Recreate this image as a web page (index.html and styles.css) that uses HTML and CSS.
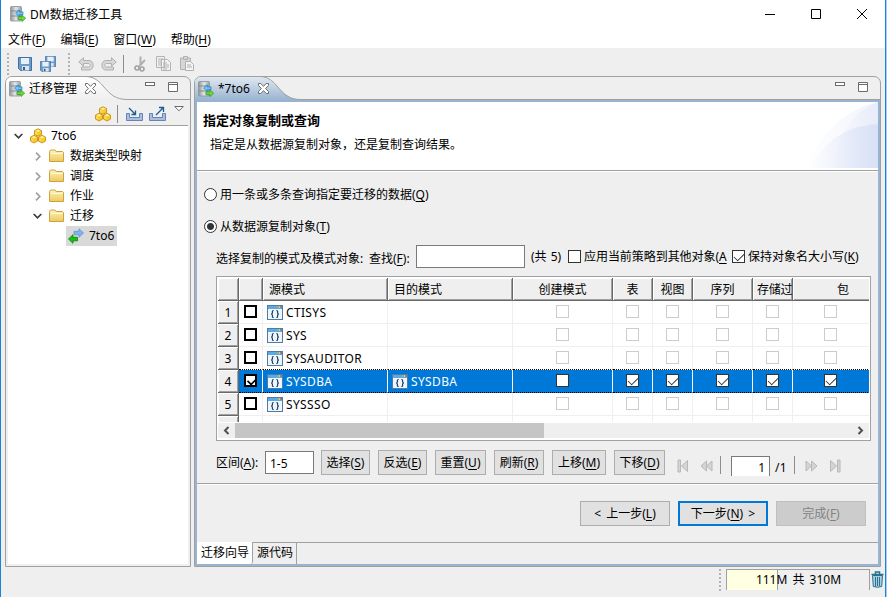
FILE: index.html
```
<!DOCTYPE html>
<html lang="zh-CN">
<head>
  <meta charset="UTF-8" />
  <meta name="viewport" content="width=device-width, initial-scale=1.0"/>
  <title>DM数据迁移工具</title>
  <link rel="stylesheet" href="styles.css">
</head>
<body>
  <!-- shared icons -->
  <svg class="defs" width="0" height="0">
    <defs>
      <linearGradient id="srv" x1="0" x2="1" y1="0" y2="0">
        <stop offset="0" stop-color="#8f9599"/><stop offset=".5" stop-color="#e4e6e7"/><stop offset="1" stop-color="#9a9fa2"/>
      </linearGradient>
      <linearGradient id="tabBlue" x1="0" x2="0" y1="0" y2="1">
        <stop offset="0" stop-color="#e0e8f1"/><stop offset="1" stop-color="#99b4d1"/>
      </linearGradient>
      <linearGradient id="tabWhite" x1="0" x2="0" y1="0" y2="1">
        <stop offset="0" stop-color="#ffffff"/><stop offset="1" stop-color="#efefef"/>
      </linearGradient>
      <linearGradient id="fold" x1="0" x2="0" y1="0" y2="1">
        <stop offset="0" stop-color="#fdf3bd"/><stop offset="1" stop-color="#ecc95c"/>
      </linearGradient>
      <linearGradient id="arc" x1="0" x2="1" y1="0" y2="0">
        <stop offset="0" stop-color="#ccd7f3" stop-opacity="0"/><stop offset="1" stop-color="#ccd7f3" stop-opacity=".55"/>
      </linearGradient>
      <symbol id="app" viewBox="0 0 16 16">
        <rect x=".5" y=".5" width="11" height="14.500" rx="1" fill="url(#srv)" stroke="#8c9296" stroke-width=".8"/>
        <path d="M1 5h10M1 10h10" stroke="#858b8f"/>
        <path d="M5.500 7.200l3.800-3.300v2H13v2.700H9.300v2z" fill="#6cc6f7" stroke="#1b7cc4" stroke-width=".7"/>
        <path d="M15.700 12.200l-3.700-3.300v2H8v2.700h4v2z" fill="#6ddb35" stroke="#2f9a1c" stroke-width=".7"/>
      </symbol>
      <symbol id="save" viewBox="0 0 14 14">
        <path d="M.5.5h13v13h-11l-2-2z" fill="#6f9bc8" stroke="#3f6fa5"/>
        <rect x="3" y="1" width="8" height="6" fill="#e6f0fa"/>
        <rect x="4" y="9" width="7" height="4.500" fill="#dce3ea"/><rect x="5" y="10" width="2" height="3" fill="#345f90"/>
      </symbol>
      <symbol id="undo" viewBox="0 0 16 14">
        <path d="M5.500.7v2.800H11c5.500 0 5.500 9.500 0 9.500H3.500v-3h7c2.300 0 2.300-3.500 0-3.500h-5v2.800L.8 5z" fill="#d8d8d8" stroke="#b0b0b0"/>
      </symbol>
      <symbol id="cubes" viewBox="0 0 16 16">
        <g stroke="#bd8806" stroke-width=".8" fill="#fbc72b">
          <path d="M8 .8l3.500 1.700v4L8 8.300 4.500 6.500v-4zM4 7.300l3.500 1.800v4L4 15 .5 13.100v-4zM12 7.300l3.500 1.800v4L12 15l-3.500-1.900v-4z"/>
        </g>
        <path d="M8 1.500l2.500 1.300L8 4 5.500 2.800zM4 8l2.500 1.300L4 10.600 1.500 9.300zM12 8l2.500 1.300-2.500 1.300-2.500-1.300z" fill="#fff1a0"/>
        <path d="M5.300 3.600L7.500 5v2l-2.200-1.100zM1.300 10.200l2.200 1.300v2l-2.200-1.100zM9.300 10.200l2.200 1.300v2l-2.200-1.100z" fill="#fddc5e"/>
      </symbol>
      <symbol id="folder" viewBox="0 0 15 14">
        <path d="M.5 12.500v-10l1-1.500h4.500l1.200 1.500H13.500l1 1v9z" fill="url(#fold)" stroke="#cfa23e"/>
        <path d="M2 4.500h11.500" stroke="#fff8d8"/>
      </symbol>
      <symbol id="close" viewBox="0 0 11 11">
        <path d="M.5.5h2.300l2.700 2.900L8.200.5h2.300v2L7.600 5.500l2.900 3v2H8.200L5.500 7.600l-2.700 2.900H.5v-2l2.900-3-2.900-3z" fill="#fff" stroke="#6c6c6c"/>
      </symbol>
      <symbol id="min" viewBox="0 0 10 4"><rect x=".5" y=".5" width="9" height="3" fill="#fff" stroke="#6b6b6b"/></symbol>
      <symbol id="max" viewBox="0 0 10 10"><path d="M.5.5h9v9h-9zM0 2.500h10" fill="#fff" stroke="#6b6b6b"/></symbol>
      <symbol id="right" viewBox="0 0 6 9"><path d="M1 .7l3.800 3.800L1 8.300" fill="none" stroke="#a0a0a0" stroke-width="1.700"/></symbol>
      <symbol id="down" viewBox="0 0 9 6"><path d="M.7 1l3.800 3.800L8.300 1" fill="none" stroke="#3c3c3c" stroke-width="1.700"/></symbol>
      <symbol id="schema" viewBox="0 0 16 15">
        <rect x=".5" y=".5" width="15" height="14" fill="#f0f5fb" stroke="#4c7daa"/>
        <path d="M1 2.500h14" stroke="#5fa8e6" stroke-width="3"/>
        <path d="M10 2h1.500" stroke="#7ed04a" stroke-width="1.500"/><path d="M12 2h1" stroke="#ffe04a" stroke-width="1.500"/><path d="M13.500 2h1.500" stroke="#e84b2c" stroke-width="1.500"/>
        <path d="M6.700 5.500q-1.500 0-1.300 1.500.2 2-1.400 2 1.600 0 1.400 2-.2 1.500 1.300 1.500M9.300 5.500q1.500 0 1.300 1.500-.2 2 1.400 2-1.600 0-1.400 2 .2 1.500-1.300 1.500" fill="none" stroke="#1d3f66" stroke-width="1.200"/>
      </symbol>
      <symbol id="first" viewBox="0 0 13 14">
        <path d="M1 1h2.500v12H1zM10.500 1.500v11L4.500 7z" fill="#d4d4d4" stroke="#b8b8b8"/>
      </symbol>
      <symbol id="prev" viewBox="0 0 13 14">
        <path d="M6.500 2v10L1 7zM12 2v10L6.500 7z" fill="#d4d4d4" stroke="#b8b8b8"/>
      </symbol>
    </defs>
  </svg>

  <div class="window">
    <div class="titlebar">
      <svg class="app-icon" width="16" height="16"><use href="#app"/></svg>
      <span class="title">DM数据迁移工具</span>
      <div class="window-buttons">
        <svg width="10" height="10"><path d="M0 5.500h10" stroke="#000"/></svg>
        <svg width="10" height="10"><path d="M.5.5h9v9h-9z" fill="none" stroke="#000"/></svg>
        <svg width="10" height="10"><path d="M0 0l10 10M10 0L0 10" stroke="#000"/></svg>
      </div>
    </div>

    <div class="menubar">
      <span>文件(<u>F</u>)</span>
      <span>编辑(<u>E</u>)</span>
      <span>窗口(<u>W</u>)</span>
      <span>帮助(<u>H</u>)</span>
    </div>

    <div class="toolbar">
      <i class="grip"></i>
      <svg class="tool-save" width="14" height="14"><use href="#save"/></svg>
      <svg class="tool-saveall" width="16" height="16" viewBox="0 0 16 16">
        <use href="#save" x="5" width="11" height="11"/>
        <use href="#save" y="5" width="11" height="11"/>
      </svg>
      <i class="grip grip-second"></i>
      <svg class="tool-undo" width="16" height="14"><use href="#undo"/></svg>
      <svg class="tool-redo" width="16" height="14"><use href="#undo"/></svg>
      <i class="separator"></i>
      <svg class="tool-cut" width="12" height="16" viewBox="0 0 12 16" fill="none">
        <path d="M6.500.5v8.500M11 4L5 10.500" stroke="#b0b0b0" stroke-width="2"/>
        <circle cx="3" cy="12" r="2" stroke="#a0a0a0" stroke-width="1.600"/><circle cx="8" cy="13" r="2" stroke="#a0a0a0" stroke-width="1.600"/>
      </svg>
      <svg class="tool-copy" width="15" height="15" viewBox="0 0 15 15" fill="#f2f2f2" stroke="#b3b3b3">
        <path d="M.5.5h8v11h-8zM5.500 3.500h6l3 3v8h-9z"/><path d="M2 3h5M2 5h3M2 7h3M2 9h3M7 7h4M7 9h6M7 11h6M7 13h4"/>
      </svg>
      <svg class="tool-paste" width="14" height="15" viewBox="0 0 14 15" fill="#d6d6d6" stroke="#b0b0b0">
        <path d="M.5 2h10v11.500H.5z"/><path d="M3.500.5h4v3h-4z"/><path d="M5.500 5.500h5l3 3v6h-8z" fill="#f4f4f4"/><path d="M7 9h4M7 11h5"/>
      </svg>
    </div>

    <div class="workbench">
      <div class="panel explorer">
        <div class="panel-head">
          <svg class="head-shape" width="184" height="23">
            <path d="M0 22.500V0H82C98 0 98 22.500 121 22.500z" fill="url(#tabWhite)"/>
            <path d="M80-.5C99 0 98 22.500 121 22.500H184" fill="none" stroke="#a0a0a0"/>
          </svg>
          <div class="head-row">
            <svg class="app-icon" width="16" height="16"><use href="#app"/></svg>
            <span class="tab-name">迁移管理</span>
            <svg width="11" height="11"><use href="#close"/></svg>
            <div class="head-buttons">
              <svg width="10" height="4"><use href="#min"/></svg>
              <svg width="10" height="10"><use href="#max"/></svg>
            </div>
          </div>
        </div>
        <div class="explorer-tools">
          <svg width="16" height="16"><use href="#cubes"/></svg>
          <i class="separator"></i>
          <svg width="17" height="16" viewBox="0 0 17 16">
            <path d="M.5 7.500h3v4h10v-4h3v7H.5z" fill="#a9bfe0" stroke="#6583b4"/><path d="M3 2l6 6M9.500 4.500v4h-4" stroke="#1c5b91" fill="none" stroke-width="1.300"/>
          </svg>
          <svg width="17" height="16" viewBox="0 0 17 16">
            <path d="M.5 7.500h3v4h10v-4h3v7H.5z" fill="#a9bfe0" stroke="#6583b4"/><path d="M7 9l7-7M10 1.500h4.500V6" stroke="#1c5b91" fill="none" stroke-width="1.300"/>
          </svg>
          <svg class="view-menu" width="10" height="6"><path d="M.7.5h8.600L5 4.800z" fill="#fff" stroke="#6b6b6b"/></svg>
        </div>
        <ul class="tree">
          <li class="level-0"><svg class="arrow" width="9" height="6"><use href="#down"/></svg><svg class="node" width="16" height="16"><use href="#cubes"/></svg><span>7to6</span></li>
          <li class="level-1"><svg class="arrow" width="6" height="9"><use href="#right"/></svg><svg class="node" width="15" height="14"><use href="#folder"/></svg><span>数据类型映射</span></li>
          <li class="level-1"><svg class="arrow" width="6" height="9"><use href="#right"/></svg><svg class="node" width="15" height="14"><use href="#folder"/></svg><span>调度</span></li>
          <li class="level-1"><svg class="arrow" width="6" height="9"><use href="#right"/></svg><svg class="node" width="15" height="14"><use href="#folder"/></svg><span>作业</span></li>
          <li class="level-1"><svg class="arrow" width="9" height="6"><use href="#down"/></svg><svg class="node" width="15" height="14"><use href="#folder"/></svg><span>迁移</span></li>
          <li class="level-2">
            <div class="selected-node">
              <svg width="16" height="16" viewBox="0 0 16 16">
                <path d="M15.500 5L11 .8v2.500H6v3.500h5v2.500z" fill="#7fb2ee" stroke="#5a8fd0" stroke-width=".7"/>
                <path d="M.5 11L5 6.700v2.600h4.500v3.500H5v2.500z" fill="#12c312" stroke="#0a7d0a" stroke-width=".8"/>
              </svg>
              <span>7to6</span>
            </div>
          </li>
        </ul>
      </div>

      <div class="panel editor">
        <div class="panel-head">
          <svg class="head-shape" width="685" height="23">
            <path d="M0 23V0H65C83 0 84 22.500 107 22.500V23z" fill="url(#tabBlue)"/>
            <path d="M65-.5C84 0 83 22.500 105 22.500H685" fill="none" stroke="#a0a0a0"/>
          </svg>
          <div class="head-row">
            <svg class="app-icon" width="16" height="16"><use href="#app"/></svg>
            <span class="tab-name">*7to6</span>
            <svg width="11" height="11"><use href="#close"/></svg>
            <div class="head-buttons">
              <svg width="10" height="4"><use href="#min"/></svg>
              <svg width="10" height="10"><use href="#max"/></svg>
            </div>
          </div>
        </div>

        <div class="editor-body">
          <div class="banner">
            <div class="banner-text">
              <h1>指定对象复制或查询</h1>
              <p>指定是从数据源复制对象，还是复制查询结果。</p>
            </div>
            <svg width="74" height="66" viewBox="0 0 74 66">
              <path d="M0 66C16 34 38 8 74 0V66z" fill="url(#arc)" opacity=".5"/>
              <path d="M28 66C34 36 46 10 74 0V66z" fill="url(#arc)" opacity=".5"/>
              <path d="M6 66C20 40 40 24 74 22V66z" fill="url(#arc)"/>
            </svg>
          </div>

          <div class="wizard">
            <label class="radio-row"><i class="radio"></i>用一条或多条查询指定要迁移的数据(<u>Q</u>)</label>
            <label class="radio-row second"><i class="radio on"></i>从数据源复制对象(<u>T</u>)</label>

            <div class="filter">
              <span class="filter-label">选择复制的模式及模式对象:</span>
              <span class="find-label">查找(<u>F</u>):</span>
              <input class="find" type="text">
              <span class="count">(共 5)</span>
              <i class="check dark"></i>
              <span class="apply">应用当前策略到其他对象(<u>A</u></span>
              <i class="check dark on"></i>
              <span class="keep">保持对象名大小写(<u>K</u>)</span>
            </div>

            <div class="grid">
              <div class="grid-view">
                <table>
                  <colgroup>
                    <col class="c-num"><col class="c-pick"><col class="c-name"><col class="c-name"><col class="c-create">
                    <col class="c-small"><col class="c-small"><col class="c-seq"><col class="c-small"><col class="c-pack">
                  </colgroup>
                  <tr class="head">
                    <th></th><th></th><th class="left">源模式</th><th class="left">目的模式</th><th>创建模式</th>
                    <th>表</th><th>视图</th><th>序列</th><th class="cut">存储过</th><th class="pack">包</th>
                  </tr>
                  <tr>
                    <th>1</th><td><i class="check thick"></i></td>
                    <td class="name"><svg width="16" height="15"><use href="#schema"/></svg>CTISYS</td><td></td>
                    <td><i class="check"></i></td><td><i class="check"></i></td><td><i class="check"></i></td><td><i class="check"></i></td><td><i class="check"></i></td><td class="pack"><i class="check"></i></td>
                  </tr>
                  <tr>
                    <th>2</th><td><i class="check thick"></i></td>
                    <td class="name"><svg width="16" height="15"><use href="#schema"/></svg>SYS</td><td></td>
                    <td><i class="check"></i></td><td><i class="check"></i></td><td><i class="check"></i></td><td><i class="check"></i></td><td><i class="check"></i></td><td class="pack"><i class="check"></i></td>
                  </tr>
                  <tr class="before">
                    <th>3</th><td><i class="check thick"></i></td>
                    <td class="name"><svg width="16" height="15"><use href="#schema"/></svg>SYSAUDITOR</td><td></td>
                    <td><i class="check"></i></td><td><i class="check"></i></td><td><i class="check"></i></td><td><i class="check"></i></td><td><i class="check"></i></td><td class="pack"><i class="check"></i></td>
                  </tr>
                  <tr class="selected">
                    <th>4</th><td><i class="check thick on"></i></td>
                    <td class="name"><svg width="16" height="15"><use href="#schema"/></svg>SYSDBA</td>
                    <td class="name"><svg width="16" height="15"><use href="#schema"/></svg>SYSDBA</td>
                    <td><i class="check dark"></i></td><td><i class="check dark on"></i></td><td><i class="check dark on"></i></td><td><i class="check dark on"></i></td><td><i class="check dark on"></i></td><td class="pack"><i class="check dark on"></i></td>
                  </tr>
                  <tr>
                    <th>5</th><td><i class="check thick"></i></td>
                    <td class="name"><svg width="16" height="15"><use href="#schema"/></svg>SYSSSO</td><td></td>
                    <td><i class="check"></i></td><td><i class="check"></i></td><td><i class="check"></i></td><td><i class="check"></i></td><td><i class="check"></i></td><td class="pack"><i class="check"></i></td>
                  </tr>
                  <tr>
                    <th></th><td></td><td></td><td></td><td></td><td></td><td></td><td></td><td></td><td></td>
                  </tr>
                </table>
              </div>
              <div class="scrollbar">
                <svg width="17" height="15"><path d="M10.500 4L7 7.500l3.500 3.500" fill="none" stroke="#505050" stroke-width="2"/></svg>
                <div class="thumb"></div>
                <svg width="17" height="15"><path d="M6.500 4L10 7.500 6.500 11" fill="none" stroke="#505050" stroke-width="2"/></svg>
              </div>
            </div>

            <div class="actions">
              <span class="range-label">区间(<u>A</u>):</span>
              <input class="range" type="text" value="1-5">
              <button class="w49">选择(<u>S</u>)</button>
              <button class="w49">反选(<u>E</u>)</button>
              <button class="w51">重置(<u>U</u>)</button>
              <button class="w50">刷新(<u>R</u>)</button>
              <button class="w54">上移(<u>M</u>)</button>
              <button class="w51">下移(<u>D</u>)</button>
              <div class="pager">
                <svg width="13" height="14"><use href="#first"/></svg>
                <svg width="13" height="14"><use href="#prev"/></svg>
                <i class="separator"></i>
                <input class="page" type="text" value="1">
                <span>/1</span>
                <i class="separator"></i>
                <svg class="flip" width="13" height="14"><use href="#prev"/></svg>
                <svg class="flip" width="13" height="14"><use href="#first"/></svg>
              </div>
            </div>
          </div>

          <div class="wizard-buttons">
            <button>&lt; 上一步(<u>L</u>)</button>
            <button class="default">下一步(<u>N</u>) &gt;</button>
            <button disabled>完成(<u>F</u>)</button>
          </div>

          <div class="page-tabs">
            <span class="page-tab active">迁移向导</span>
            <span class="page-tab">源代码</span>
          </div>
        </div>
      </div>
    </div>

    <div class="statusbar">
      <i class="grip"></i>
      <div class="heap"><div class="heap-used"></div><span>111M 共 310M</span></div>
      <svg width="13" height="17" viewBox="0 0 13 17">
        <path d="M1.500 4.500h10l-.8 11q-4.200 1.500-8.400 0z" fill="#a8d0dc" stroke="#2a7290"/>
        <path d="M4.500 6v9M6.500 6v9M8.500 6v9" stroke="#2a7290"/>
        <path d="M.5 3.500h12M4.500 3V1h4v2" fill="none" stroke="#2a7290" stroke-width="1.500"/>
      </svg>
    </div>
  </div>
</body>
</html>
```
FILE: styles.css
```
* {
  box-sizing: border-box;
}
body {
  margin: 0;
  width: 887px;
  height: 597px;
  overflow: hidden;
  background: #a9cdea;
  font-family: "Noto Sans", "Noto Sans CJK SC", sans-serif;
  font-size: 12px;
  line-height: 16px;
  color: #000;
}
svg {
  display: block;
  flex: none;
}
i {
  flex: none;
}
.defs {
  position: absolute;
}
span, label, button {
  white-space: nowrap;
}
u {
  text-underline-offset: 2px;
}
input, button {
  font: inherit;
  color: inherit;
  border-radius: 0;
  outline: none;
}
input {
  background: #fff;
  border: 1px solid #7a7a7a;
  padding: 1px 4px 0;
}
.window {
  width: 886px;
  height: 597px;
  border-left: 1px solid #1883d7;
  border-right: 1px solid #1883d7;
  background: #efefef;
  display: flex;
  flex-direction: column;
}

/* title and menu */
.titlebar {
  height: 30px;
  flex: none;
  background: #fff;
  display: flex;
  align-items: center;
  padding: 0 18px 2px 9px;
}
.title {
  margin-left: 4px;
  padding-top: 2px;
  letter-spacing: .1px;
}
.window-buttons {
  margin-left: auto;
  display: flex;
  gap: 36px;
}
.menubar {
  height: 18px;
  flex: none;
  background: #fff;
  display: flex;
  align-items: center;
  gap: 15px;
  padding: 2px 0 0 7px;
}

/* toolbar */
.toolbar {
  height: 28px;
  flex: none;
  display: flex;
  align-items: center;
  padding: 3px 0 0 6px;
}
.grip {
  width: 2px;
  height: 22px;
  background: repeating-linear-gradient(#b4b4b4 0 2px, transparent 2px 4px);
}
.separator {
  width: 1px;
  height: 18px;
  background: #8c8c8c;
}
.tool-save {
  margin-left: 9px;
}
.tool-saveall {
  margin-left: 8px;
}
.grip-second {
  margin-left: 12px;
}
.tool-undo {
  margin-left: 8px;
}
.tool-redo {
  margin-left: 7px;
  transform: scaleX(-1);
}
.toolbar .separator {
  margin-left: 6px;
}
.tool-cut {
  margin-left: 10px;
}
.tool-copy {
  margin-left: 10px;
}
.tool-paste {
  margin-left: 9px;
}

/* panels */
.workbench {
  flex: none;
  height: 491px;
  display: flex;
  gap: 3px;
  padding-left: 4px;
}
.panel {
  border: 1px solid #a0a0a0;
  border-radius: 7px 7px 0 0;
  display: flex;
  flex-direction: column;
  overflow: hidden;
}
.explorer {
  width: 186px;
}
.editor {
  width: 687px;
}
.panel-head {
  height: 23px;
  flex: none;
  display: grid;
}
.head-shape, .head-row {
  grid-area: 1 / 1;
}
.head-row {
  display: flex;
  align-items: center;
  padding: 0 12px 0 3px;
}
.tab-name {
  margin: 0 8px 0 4px;
}
.head-buttons {
  margin-left: auto;
  display: flex;
  gap: 13px;
  align-items: flex-start;
  padding-bottom: 3px;
}
.explorer-tools {
  height: 25px;
  flex: none;
  display: flex;
  align-items: center;
  gap: 6px;
  padding: 2px 4px 0 89px;
}
.explorer-tools .separator {
  margin: 0 2px 0 0;
}
.view-menu {
  margin: 0 0 9px 2px;
}
.tree {
  flex: 1;
  margin: 0 2px 2px;
  padding: 0;
  list-style: none;
  background: #fff;
  border-top: 1px solid #a0a0a0;
}
.tree li {
  height: 20px;
  display: flex;
  align-items: center;
}
.arrow {
  margin-right: 7px;
}
.arrow[width="6"] {
  margin: 0 8px 0 2px;
}
.node {
  margin-right: 5px;
}
.level-0 {
  padding-left: 6px;
}
.level-1 {
  padding-left: 25px;
}
.level-1 .node {
  margin: 0 6px 0 0;
}
.level-2 {
  padding-left: 58px;
}
.selected-node {
  height: 20px;
  width: 51px;
  display: flex;
  align-items: center;
  gap: 5px;
  padding-left: 2px;
  background: #d9d9d9;
}

/* editor */
.editor-body {
  flex: 1;
  border: 2px solid #99b4d1;
  display: flex;
  flex-direction: column;
}
.banner {
  height: 70px;
  flex: none;
  display: flex;
  justify-content: space-between;
  background: #fff;
  border-bottom: 1px solid #fff;
  box-shadow: inset 0 -1px #a0a0a0;
}
.banner-text {
  padding: 10px 0 0 6px;
}
.banner h1 {
  margin: 0;
  font-size: 13px;
  line-height: 16px;
}
.banner p {
  margin: 9px 0 0 7px;
}
.wizard {
  height: 311px;
  flex: none;
  padding-left: 7px;
}
.radio-row {
  height: 16px;
  margin-top: 15px;
  display: flex;
  align-items: center;
}
.radio-row.second {
  margin-top: 16px;
}
.radio {
  width: 13px;
  height: 13px;
  margin: -2px 3px 0 0;
  border: 1px solid #333;
  border-radius: 50%;
  background: #fff;
}
.radio.on {
  background: radial-gradient(circle, #333 3px, #fff 4px);
}
.filter {
  height: 23px;
  margin-top: 10px;
  padding-left: 12px;
  display: flex;
  align-items: center;
}
.filter-label {
  width: 153px;
  padding-top: 4px;
}
.find-label {
  width: 47px;
  padding-top: 4px;
}
.find {
  width: 109px;
  height: 23px;
}
.count {
  width: 37px;
  margin-left: 6px;
  word-spacing: 1px;
}
.apply {
  width: 143px;
  margin: 0 5px 0 3px;
  letter-spacing: -.05px;
}
.keep {
  margin-left: 3px;
}
.check {
  display: block;
  width: 13px;
  height: 13px;
  margin: -1px auto 0;
  border: 1px solid #ccc;
  background: #fff;
}
.check.dark {
  border-color: #333;
}
.filter .check {
  margin: 0;
}
.check.on::after {
  content: "";
  display: block;
  width: 9px;
  height: 5px;
  margin: 2px 0 0 1px;
  border: solid #333;
  border-width: 0 0 1.500px 1.500px;
  transform: rotate(-45deg) scale(.95);
}
.check.thick {
  border: 2px solid #000;
}
.check.thick.on::after {
  width: 8px;
  height: 5px;
  margin: 1px 0 0 1px;
  border-color: #000;
  border-width: 0 0 2px 2px;
  transform: rotate(-45deg) scale(.85);
}

/* schema table */
.grid {
  width: 655px;
  height: 165px;
  margin: 8px 0 0 12px;
  padding: 1px 1px 2px;
  border: 1px solid #a0a0a8;
  background: #fff;
}
.grid-view {
  height: 144px;
  overflow: hidden;
}
table {
  width: 676px;
  table-layout: fixed;
  border-collapse: separate;
  border-spacing: 0;
}
.c-num { width: 21px; }
.c-pick { width: 24px; }
.c-name { width: 125px; }
.c-create { width: 100px; }
.c-small { width: 40px; }
.c-seq { width: 60px; }
.c-pack { width: 101px; }
th, td {
  height: 23px;
  padding: 0;
  overflow: hidden;
  white-space: nowrap;
  line-height: 16px;
}
th {
  padding-top: 1px;
  background: #efefef;
  font-weight: normal;
  text-align: center;
  border-right: 1px solid #696969;
  border-bottom: 1px solid #696969;
  box-shadow: inset 1px 1px #fff, inset -1px -1px #a0a0a0;
}
th.left {
  text-align: left;
  padding-left: 6px;
}
th.cut {
  text-align: left;
  padding-left: 4px;
  letter-spacing: -.3px;
}
td {
  border-right: 1px solid #efefef;
  border-bottom: 1px solid #efefef;
}
td.name {
  padding-top: 1px;
  letter-spacing: .35px;
}
td.name svg {
  display: inline-block;
  vertical-align: middle;
  margin: -2px 3px 0 4px;
}
td.pack {
  padding-right: 25px;
}
.before td {
  border-bottom: 1px dotted #000;
}
.selected td {
  background: #0078d7;
  color: #fff;
  border-right-color: #fff;
  border-bottom: 1px dotted #000;
}
.scrollbar {
  height: 15px;
  margin-top: 1px;
  background: #efefef;
  display: flex;
}
.thumb {
  width: 309px;
  margin-right: auto;
  background: #c5c5c5;
}

/* row of actions under the table */
.actions {
  height: 25px;
  margin-top: 9px;
  padding-left: 12px;
  display: flex;
  align-items: center;
}
.range-label {
  width: 49px;
}
.range {
  width: 49px;
  height: 23px;
  margin-right: -1px;
}
button {
  padding: 0;
  height: 25px;
  border: 1px solid #adadad;
  background: #e1e1e1;
}
.actions button {
  margin-left: 8px;
}
.w49 { width: 49px; }
.w50 { width: 50px; }
.w51 { width: 51px; }
.w54 { width: 54px; }
.pager {
  height: 20px;
  margin: 7px 0 0 12px;
  display: flex;
  align-items: center;
}
.pager svg + svg {
  margin-left: 10px;
}
.pager .separator {
  margin: 0 10px 2px 7px;
}
.page {
  width: 39px;
  height: 20px;
  padding-top: 2px;
  border-bottom: none;
  text-align: right;
}
.pager span {
  margin: 4px 0 0 5px;
  letter-spacing: .3px;
}
.flip {
  transform: scaleX(-1);
}

.wizard-buttons {
  height: 60px;
  flex: none;
  display: flex;
  justify-content: flex-end;
  gap: 8px;
  padding: 17px 12px 0 0;
  border-top: 1px solid #a0a0a0;
  box-shadow: inset 0 1px #fff;
}
.wizard-buttons button {
  width: 90px;
  word-spacing: 2px;
}
.wizard-buttons .default {
  border: 2px solid #0078d7;
}
.wizard-buttons button:disabled {
  background: #ccc;
  border-color: #bfbfbf;
  color: #838383;
}
.page-tabs {
  flex: 1;
  margin-top: -1px;
  display: flex;
  border-top: 1px solid #a0a0a0;
}
.page-tab {
  padding: 2px 3px 0 4px;
  border-right: 1px solid #a0a0a0;
}
.page-tab.active {
  margin-top: -1px;
  padding-top: 3px;
  background: #fff;
  border-bottom-right-radius: 3px;
}

/* status line */
.statusbar {
  flex: 1;
  display: flex;
  justify-content: flex-end;
  align-items: flex-start;
  padding: 2px 1px 0 0;
}
.heap {
  width: 144px;
  height: 21px;
  margin: 0 1px 0 5px;
  display: grid;
  border: solid #a0a0a0;
  border-width: 1px 1px 0;
}
.heap-used, .heap span {
  grid-area: 1 / 1;
}
.heap-used {
  width: 51px;
  background: #ffffe1;
  border-right: 1px solid #a0a0a0;
}
.heap span {
  text-align: center;
  padding: 2px 0 0 1px;
  word-spacing: 2px;
}
.statusbar svg {
  margin-top: 2px;
}
```
